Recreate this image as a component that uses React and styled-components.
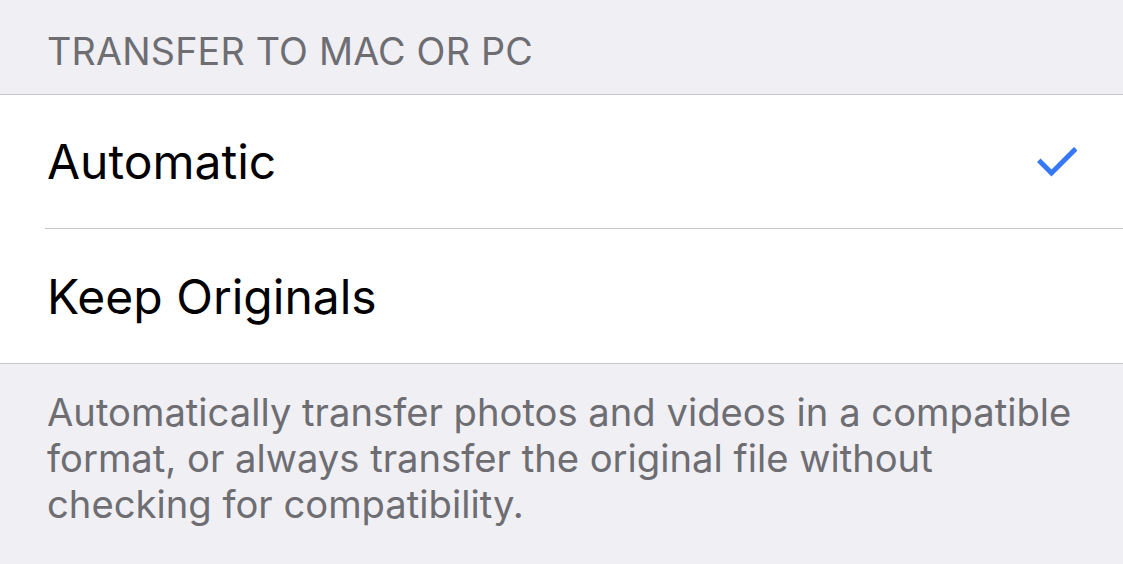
import React from 'react';
import styled, { createGlobalStyle } from 'styled-components';

const GlobalStyle = createGlobalStyle`
  html, body {
    margin: 0;
    padding: 0;
    background: #efeff4;
  }
  body {
    font-family: Inter, "Noto Sans", sans-serif;
    -webkit-font-smoothing: antialiased;
  }
`;

const options = [
  { label: 'Automatic', selected: true },
  { label: 'Keep Originals', selected: false },
];

const Check = () => (
  <svg width="40" height="30" viewBox="0 0 40 30">
    <path
      d="M3.5 15 L14.5 26 L37 3.5"
      fill="none"
      stroke="#3478f6"
      strokeWidth="5"
      strokeLinecap="square"
    />
  </svg>
);

const App = () => (
  <Page>
    <GlobalStyle />
    <SectionHeader>Transfer to Mac or PC</SectionHeader>
    <Group>
      {options.map((opt, i) => (
        <Row key={opt.label} last={i === options.length - 1}>
          <Label>{opt.label}</Label>
          {opt.selected && <Check />}
        </Row>
      ))}
    </Group>
    <Footer>
      Automatically transfer photos and videos in a compatible format, or always
      transfer the original file without checking for compatibility.
    </Footer>
  </Page>
);

const Page = styled.div`
  width: 1123px;
  height: 564px;
  background: #efeff4;
  overflow: hidden;
`;

const SectionHeader = styled.div`
  height: 94px;
  box-sizing: border-box;
  padding: 31px 47px 0;
  font-size: 37.7px;
  line-height: 40px;
  text-transform: uppercase;
  color: #6d6d72;
  letter-spacing: 0.2px;
`;

const Group = styled.div`
  background: #fff;
  border-top: 1px solid #c8c7cc;
  border-bottom: 1px solid #c8c7cc;
  padding-left: 45px;
`;

const Row = styled.div`
  height: ${(p) => (p.last ? '134px' : '133px')};
  display: flex;
  align-items: center;
  justify-content: space-between;
  padding-right: 46px;
  border-bottom: ${(p) => (p.last ? 'none' : '1px solid #c8c7cc')};
`;

const Label = styled.span`
  padding-left: 2px;
  font-size: 48px;
  color: #000;
`;

const Footer = styled.p`
  margin: 0;
  padding: 25px 40px 0 47px;
  font-size: 38.2px;
  line-height: 46px;
  color: #6d6d72;
`;

export default App;
